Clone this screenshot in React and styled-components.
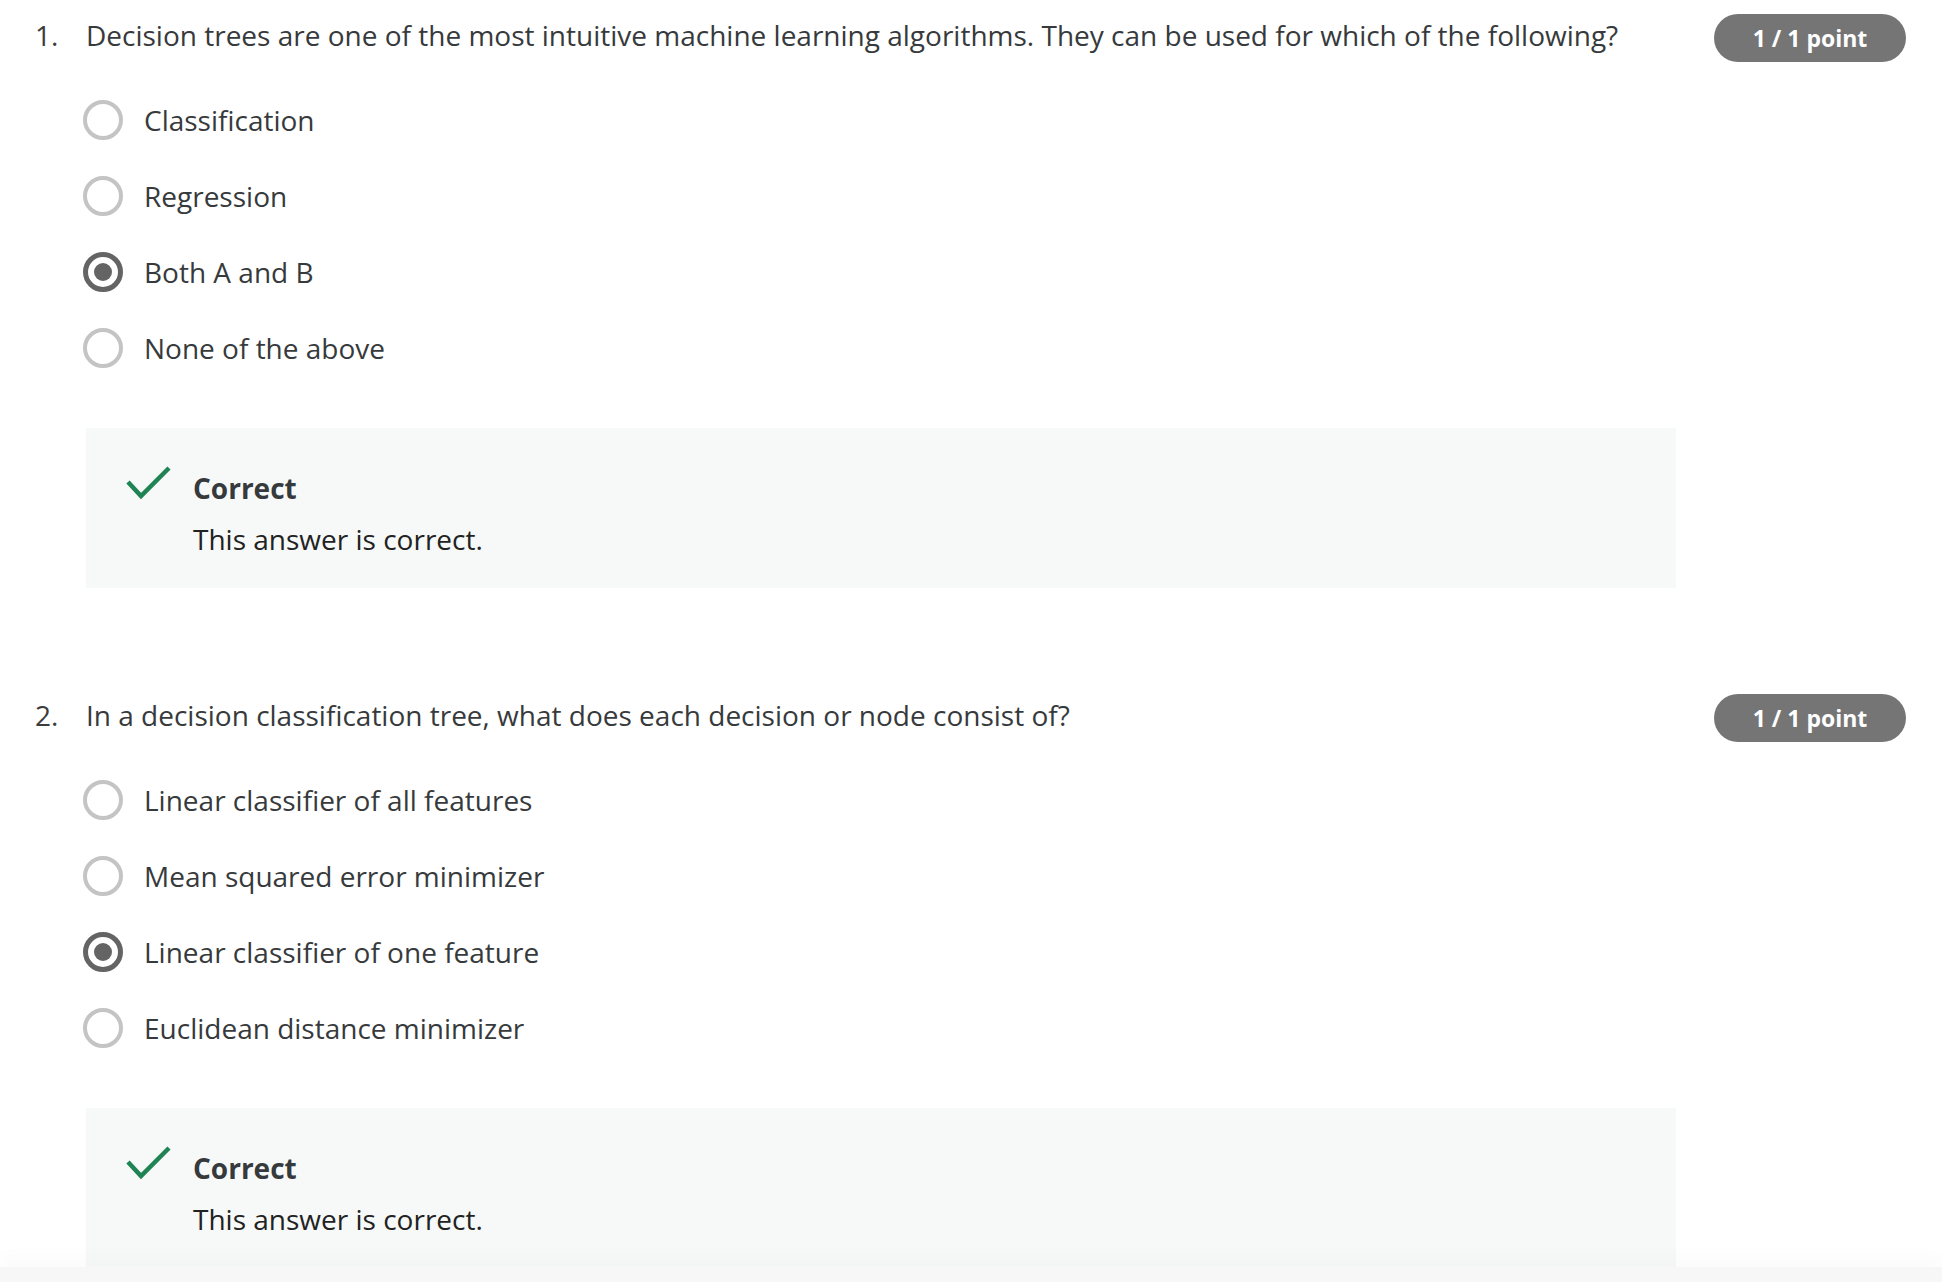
import styled, { createGlobalStyle } from "styled-components";

const Global = createGlobalStyle`
  body { margin:0; background:#fff; font-family:"Open Sans", "Noto Sans", sans-serif; color:#333; }
`;

const Page = styled.div`padding:14px 36px 40px 35px;`;
const Question = styled.section`display:flex;align-items:flex-start;& + &{margin-top:106px;}`;
const Num = styled.div`width:51px;flex:none;font-size:28px;line-height:40px;padding-top:1px;color:#3c3c3c;`;
const Main = styled.div`flex:1;min-width:0;`;
const Prompt = styled.div`font-size:28px;line-height:40px;padding-top:1px;color:#373a3c;`;
const Options = styled.div`display:flex;flex-direction:column;gap:36px;margin:45px 0 0 -3px;`;
const Option = styled.label`display:flex;align-items:center;gap:21px;font-size:28px;line-height:40px;color:#373a3c;`;
const Radio = styled.span`
  width:40px;height:40px;box-sizing:border-box;border-radius:50%;flex:none;
  border:${p => p.checked ? "5px solid #646464" : "4px solid #c4c4c4"};
  display:flex;align-items:center;justify-content:center;
  &::after{content:"";width:18px;height:18px;border-radius:50%;background:#646464;display:${p => p.checked ? "block" : "none"};}
`;
const Badge = styled.div`
  flex:none;margin-left:38px;width:192px;height:48px;border-radius:24px;background:#757575;color:#fff;
  font-weight:700;font-size:23px;display:flex;align-items:center;justify-content:center;
`;
const Feedback = styled.div`margin-top:60px;background:#f6f9f8;padding:40px 42px 29px;display:flex;`;
const CheckCol = styled.div`width:65px;flex:none;`;
const FbTitle = styled.div`font-size:28px;line-height:40px;font-weight:700;color:#373a3c;`;
const FbText = styled.div`font-size:28px;line-height:40px;margin-top:11px;color:#222;`;
const BottomBar = styled.div`position:fixed;left:0;right:0;bottom:0;height:15px;background:#f7f7f7;box-shadow:0 -10px 18px rgba(0,0,0,0.025);`;

const Check = () => (
  <svg width="46" height="35" viewBox="0 0 46 35" style={{ display: "block", marginLeft: -2, marginTop: -3 }}>
    <polyline points="2,17 15,31 43,3" fill="none" stroke="#1f8354" strokeWidth="4.5" />
  </svg>
);

const questions = [
  {
    n: "1.",
    text: "Decision trees are one of the most intuitive machine learning algorithms. They can be used for which of the following?",
    options: ["Classification", "Regression", "Both A and B", "None of the above"],
    picked: 2,
  },
  {
    n: "2.",
    text: "In a decision classification tree, what does each decision or node consist of?",
    options: ["Linear classifier of all features", "Mean squared error minimizer", "Linear classifier of one feature", "Euclidean distance minimizer"],
    picked: 2,
  },
];

export default function App() {
  return (
    <Page>
      <Global />
      {questions.map(q => (
        <Question key={q.n}>
          <Num>{q.n}</Num>
          <Main>
            <Prompt>{q.text}</Prompt>
            <Options>
              {q.options.map((o, i) => (
                <Option key={o}>
                  <Radio checked={i === q.picked} />
                  {o}
                </Option>
              ))}
            </Options>
            <Feedback>
              <CheckCol><Check /></CheckCol>
              <div>
                <FbTitle>Correct</FbTitle>
                <FbText>This answer is correct.</FbText>
              </div>
            </Feedback>
          </Main>
          <Badge>1 / 1 point</Badge>
        </Question>
      ))}
      <BottomBar />
    </Page>
  );
}
